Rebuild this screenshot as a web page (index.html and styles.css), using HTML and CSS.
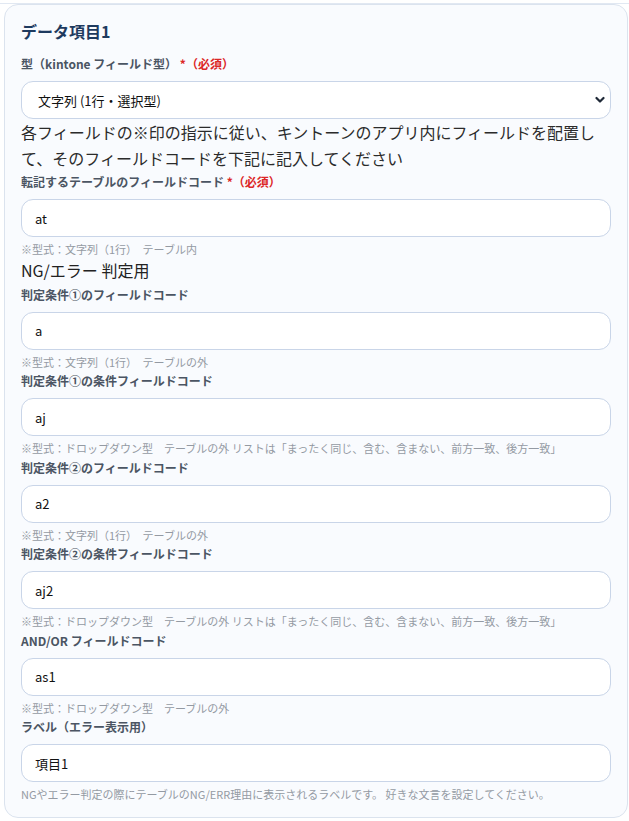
FILE: index.html
```html
<!DOCTYPE html>
<html lang="ja">
<head>
<meta charset="utf-8">
<title>データ項目1</title>
<link rel="stylesheet" href="styles.css">
</head>
<body>
<div class="topline"></div>
<section class="card">
  <h2 class="title">データ項目1</h2>

  <div class="field">
    <label class="label">型（kintone フィールド型） <span class="req">*（必須）</span></label>
    <div class="select-wrap">
      <select class="select"><option>文字列 (1行・選択型)</option></select>
      <svg class="chev" width="10" height="8" viewBox="0 0 10 8"><path d="M1.5 2 L5 5.5 L8.5 2" fill="none" stroke="#1f2937" stroke-width="2.2" stroke-linecap="round" stroke-linejoin="round"/></svg>
    </div>
  </div>
  <p class="note">各フィールドの※印の指示に従い、キントーンのアプリ内にフィールドを配置して、そのフィールドコードを下記に記入してください</p>

  <div class="field">
    <label class="label">転記するテーブルのフィールドコード <span class="req">*（必須）</span></label>
    <input class="input" type="text" value="at">
    <div class="hint">※型式：文字列（1行）　テーブル内</div>
  </div>

  <div class="section-head">NG/エラー 判定用</div>

  <div class="field first">
    <label class="label">判定条件①のフィールドコード</label>
    <input class="input" type="text" value="a">
    <div class="hint">※型式：文字列（1行）　テーブルの外</div>
  </div>

  <div class="field">
    <label class="label">判定条件①の条件フィールドコード</label>
    <input class="input" type="text" value="aj">
    <div class="hint">※型式：ドロップダウン型　テーブルの外 リストは「まったく同じ、含む、含まない、前方一致、後方一致」</div>
  </div>

  <div class="field">
    <label class="label">判定条件②のフィールドコード</label>
    <input class="input" type="text" value="a2">
    <div class="hint">※型式：文字列（1行）　テーブルの外</div>
  </div>

  <div class="field">
    <label class="label">判定条件②の条件フィールドコード</label>
    <input class="input" type="text" value="aj2">
    <div class="hint">※型式：ドロップダウン型　テーブルの外 リストは「まったく同じ、含む、含まない、前方一致、後方一致」</div>
  </div>

  <div class="field">
    <label class="label">AND/OR フィールドコード</label>
    <input class="input" type="text" value="as1">
    <div class="hint">※型式：ドロップダウン型　テーブルの外</div>
  </div>

  <div class="field">
    <label class="label">ラベル（エラー表示用）</label>
    <input class="input" type="text" value="項目1">
    <div class="hint">NGやエラー判定の際にテーブルのNG/ERR理由に表示されるラベルです。 好きな文言を設定してください。</div>
  </div>
</section>
</body>
</html>
```

FILE: styles.css
```css
* {
  box-sizing: border-box;
}

body {
  margin: 0;
  background: #ffffff;
  font-family: "Noto Sans CJK JP", "Noto Sans", sans-serif;
  color: #222222;
}

.topline {
  height: 4px;
  border-bottom: 1px solid #e1e8f2;
}

.card {
  margin-left: 4px;
  width: 624px;
  border: 1px solid #dbe3ee;
  border-radius: 14px;
  background: #f9fbfe;
  padding: 14px 16px 14px;
}

.title {
  margin: 0 0 12px;
  font-size: 16px;
  line-height: 24px;
  font-weight: 700;
  color: #1e3a5f;
}

.field {
  margin-top: 2px;
}

.field.first {
  margin-top: 3px;
}

.card > .field:first-of-type {
  margin-top: 0;
}

.label {
  display: block;
  font-size: 12px;
  line-height: 18px;
  font-weight: 700;
  color: #4b5563;
  margin-bottom: 8px;
}

.req {
  color: #dc2626;
}

.input,
.select {
  display: block;
  width: 100%;
  height: 38px;
  margin: 0;
  border: 1px solid #c9d5e8;
  border-radius: 12px;
  background: #ffffff;
  padding: 0 13px;
  font-family: "Noto Sans CJK JP", "Noto Sans", sans-serif;
  font-size: 13px;
  color: #111111;
  outline: none;
}

.select-wrap {
  position: relative;
}

.select {
  appearance: none;
  -webkit-appearance: none;
  padding-left: 16px;
}

.chev {
  position: absolute;
  right: 6px;
  top: 15px;
}

.note {
  margin: 0;
  font-size: 16px;
  line-height: 26px;
  color: #2b2b2b;
}

.hint {
  margin-top: 4px;
  font-size: 11px;
  line-height: 16.5px;
  color: #949aa3;
}

.section-head {
  font-size: 16px;
  line-height: 25px;
  color: #222222;
}
```
